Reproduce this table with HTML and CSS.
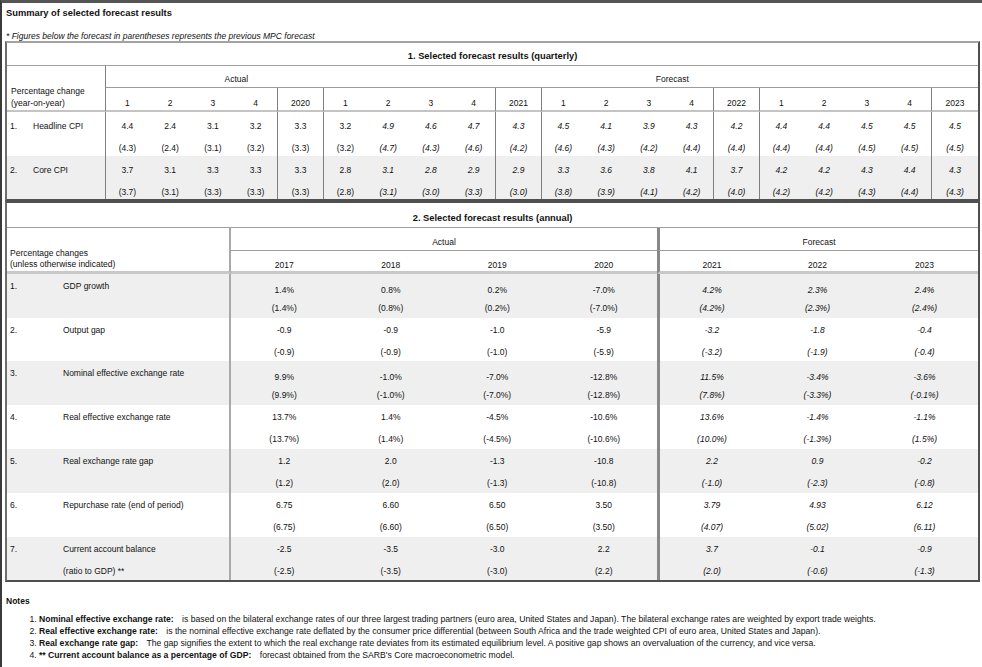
FILE: index.html
```html
<!DOCTYPE html>
<html lang="en">
<head>
<meta charset="utf-8">
<title>Summary of selected forecast results</title>
<link rel="stylesheet" href="styles.css">
</head>
<body>
<div class="page">
  <div class="title">Summary of selected forecast results</div>
  <div class="note">* Figures below the forecast in parentheses represents the previous MPC forecast</div>

  <table class="tbl quarterly">
    <colgroup>
      <col class="q-num"><col class="q-name">
      <col class="q-q" span="4"><col class="q-y">
      <col class="q-q" span="4"><col class="q-y">
      <col class="q-q" span="4"><col class="q-y">
      <col class="q-q" span="4"><col class="q-y">
    </colgroup>
    <tr class="q-title"><th colspan="22">1. Selected forecast results (quarterly)</th></tr>
    <tr class="q-h1">
      <td class="lbl-head" colspan="2" rowspan="2">Percentage change<br>(year-on-year)</td>
      <td class="grp" colspan="6">Actual</td>
      <td class="grp" colspan="14">Forecast</td>
    </tr>
    <tr class="q-h2">
      <td>1</td><td>2</td><td>3</td><td>4</td><td class="yr">2020</td>
      <td>1</td><td>2</td><td>3</td><td>4</td><td class="yr">2021</td>
      <td>1</td><td>2</td><td>3</td><td>4</td><td class="yr">2022</td>
      <td>1</td><td>2</td><td>3</td><td>4</td><td class="yr last">2023</td>
    </tr>
    <tr class="q-row">
      <td class="num">1.</td><td class="name">Headline CPI</td>
      <td>4.4<span class="p">(4.3)</span></td><td>2.4<span class="p">(2.4)</span></td><td>3.1<span class="p">(3.1)</span></td><td>3.2<span class="p">(3.2)</span></td><td class="yr">3.3<span class="p">(3.3)</span></td>
      <td>3.2<span class="p">(3.2)</span></td><td class="f">4.9<span class="p">(4.7)</span></td><td class="f">4.6<span class="p">(4.3)</span></td><td class="f">4.7<span class="p">(4.6)</span></td><td class="yr f">4.3<span class="p">(4.2)</span></td>
      <td class="f">4.5<span class="p">(4.6)</span></td><td class="f">4.1<span class="p">(4.3)</span></td><td class="f">3.9<span class="p">(4.2)</span></td><td class="f">4.3<span class="p">(4.4)</span></td><td class="yr f">4.2<span class="p">(4.4)</span></td>
      <td class="f">4.4<span class="p">(4.4)</span></td><td class="f">4.4<span class="p">(4.4)</span></td><td class="f">4.5<span class="p">(4.5)</span></td><td class="f">4.5<span class="p">(4.5)</span></td><td class="yr last f">4.5<span class="p">(4.5)</span></td>
    </tr>
    <tr class="q-row shade">
      <td class="num">2.</td><td class="name">Core CPI</td>
      <td>3.7<span class="p">(3.7)</span></td><td>3.1<span class="p">(3.1)</span></td><td>3.3<span class="p">(3.3)</span></td><td>3.3<span class="p">(3.3)</span></td><td class="yr">3.3<span class="p">(3.3)</span></td>
      <td>2.8<span class="p">(2.8)</span></td><td class="f">3.1<span class="p">(3.1)</span></td><td class="f">2.8<span class="p">(3.0)</span></td><td class="f">2.9<span class="p">(3.3)</span></td><td class="yr f">2.9<span class="p">(3.0)</span></td>
      <td class="f">3.3<span class="p">(3.8)</span></td><td class="f">3.6<span class="p">(3.9)</span></td><td class="f">3.8<span class="p">(4.1)</span></td><td class="f">4.1<span class="p">(4.2)</span></td><td class="yr f">3.7<span class="p">(4.0)</span></td>
      <td class="f">4.2<span class="p">(4.2)</span></td><td class="f">4.2<span class="p">(4.2)</span></td><td class="f">4.3<span class="p">(4.3)</span></td><td class="f">4.4<span class="p">(4.4)</span></td><td class="yr last f">4.3<span class="p">(4.3)</span></td>
    </tr>
  </table>

  <table class="tbl annual">
    <colgroup>
      <col class="a-num"><col class="a-name">
      <col class="a-act" span="4">
      <col class="a-fc" span="3">
    </colgroup>
    <tr class="a-title"><th colspan="9">2. Selected forecast results (annual)</th></tr>
    <tr class="a-h1">
      <td class="lbl-head" colspan="2" rowspan="2">Percentage changes<br>(unless otherwise indicated)</td>
      <td class="grp" colspan="4">Actual</td>
      <td class="grp fc1" colspan="3">Forecast</td>
    </tr>
    <tr class="a-h2">
      <td>2017</td><td>2018</td><td>2019</td><td>2020</td>
      <td class="fc1">2021</td><td>2022</td><td>2023</td>
    </tr>
    <tr class="a-row shade tight">
      <td class="num">1.</td><td class="name">GDP growth</td>
      <td>1.4%<span class="p">(1.4%)</span></td><td>0.8%<span class="p">(0.8%)</span></td><td>0.2%<span class="p">(0.2%)</span></td><td>-7.0%<span class="p">(-7.0%)</span></td>
      <td class="fc1 f">4.2%<span class="p">(4.2%)</span></td><td class="f">2.3%<span class="p">(2.3%)</span></td><td class="f">2.4%<span class="p">(2.4%)</span></td>
    </tr>
    <tr class="a-row short">
      <td class="num">2.</td><td class="name">Output gap</td>
      <td>-0.9<span class="p">(-0.9)</span></td><td>-0.9<span class="p">(-0.9)</span></td><td>-1.0<span class="p">(-1.0)</span></td><td>-5.9<span class="p">(-5.9)</span></td>
      <td class="fc1 f">-3.2<span class="p">(-3.2)</span></td><td class="f">-1.8<span class="p">(-1.9)</span></td><td class="f">-0.4<span class="p">(-0.4)</span></td>
    </tr>
    <tr class="a-row shade tight">
      <td class="num">3.</td><td class="name">Nominal effective exchange rate</td>
      <td>9.9%<span class="p">(9.9%)</span></td><td>-1.0%<span class="p">(-1.0%)</span></td><td>-7.0%<span class="p">(-7.0%)</span></td><td>-12.8%<span class="p">(-12.8%)</span></td>
      <td class="fc1 f">11.5%<span class="p">(7.8%)</span></td><td class="f">-3.4%<span class="p">(-3.3%)</span></td><td class="f">-3.6%<span class="p">(-0.1%)</span></td>
    </tr>
    <tr class="a-row">
      <td class="num">4.</td><td class="name">Real effective exchange rate</td>
      <td>13.7%<span class="p">(13.7%)</span></td><td>1.4%<span class="p">(1.4%)</span></td><td>-4.5%<span class="p">(-4.5%)</span></td><td>-10.6%<span class="p">(-10.6%)</span></td>
      <td class="fc1 f">13.6%<span class="p">(10.0%)</span></td><td class="f">-1.4%<span class="p">(-1.3%)</span></td><td class="f">-1.1%<span class="p">(1.5%)</span></td>
    </tr>
    <tr class="a-row shade">
      <td class="num">5.</td><td class="name">Real exchange rate gap</td>
      <td>1.2<span class="p">(1.2)</span></td><td>2.0<span class="p">(2.0)</span></td><td>-1.3<span class="p">(-1.3)</span></td><td>-10.8<span class="p">(-10.8)</span></td>
      <td class="fc1 f">2.2<span class="p">(-1.0)</span></td><td class="f">0.9<span class="p">(-2.3)</span></td><td class="f">-0.2<span class="p">(-0.8)</span></td>
    </tr>
    <tr class="a-row">
      <td class="num">6.</td><td class="name">Repurchase rate (end of period)</td>
      <td>6.75<span class="p">(6.75)</span></td><td>6.60<span class="p">(6.60)</span></td><td>6.50<span class="p">(6.50)</span></td><td>3.50<span class="p">(3.50)</span></td>
      <td class="fc1 f">3.79<span class="p">(4.07)</span></td><td class="f">4.93<span class="p">(5.02)</span></td><td class="f">6.12<span class="p">(6.11)</span></td>
    </tr>
    <tr class="a-row shade short">
      <td class="num">7.</td><td class="name">Current account balance<span class="p">(ratio to GDP) **</span></td>
      <td>-2.5<span class="p">(-2.5)</span></td><td>-3.5<span class="p">(-3.5)</span></td><td>-3.0<span class="p">(-3.0)</span></td><td>2.2<span class="p">(2.2)</span></td>
      <td class="fc1 f">3.7<span class="p">(2.0)</span></td><td class="f">-0.1<span class="p">(-0.6)</span></td><td class="f">-0.9<span class="p">(-1.3)</span></td>
    </tr>
  </table>

  <div class="notes">
    <div class="notes-title">Notes</div>
    <ol class="notes-list">
      <li><b>Nominal effective exchange rate:</b> is based on the bilateral exchange rates of our three largest trading partners (euro area, United States and Japan). The bilateral exchange rates are weighted by export trade weights.</li>
      <li><b>Real effective exchange rate:</b> is the nominal effective exchange rate deflated by the consumer price differential (between South Africa and the trade weighted CPI of euro area, United States and Japan).</li>
      <li><b>Real exchange rate gap:</b> The gap signifies the extent to which the real exchange rate deviates from its estimated equilibrium level. A positive gap shows an overvaluation of the currency, and vice versa.</li>
      <li><b>** Current account balance as a percentage of GDP:</b> forecast obtained from the SARB's Core macroeconometric model.</li>
    </ol>
  </div>
</div>
</body>
</html>
```

FILE: styles.css
```css
* { box-sizing: border-box; }

html, body {
  margin: 0;
  padding: 0;
  background: #fff;
}

body {
  font-family: "Liberation Sans", Arial, sans-serif;
  font-size: 8.5px;
  color: #111;
}

.page {
  min-height: 667px;
  border-top: 3px solid #555;
  border-left: 2px solid #3a3a3a;
  padding: 0 0 0 3px;
}

.title {
  height: 20px;
  line-height: 20px;
  padding-left: 1px;
  font-size: 9.33px;
  font-weight: bold;
}

.note {
  height: 18px;
  padding: 7px 0 0 1px;
  line-height: 12px;
  font-style: italic;
}

/* ---------- shared table ---------- */
.tbl {
  width: 975px;
  table-layout: fixed;
  border-collapse: separate;
  border-spacing: 0;
  border-style: solid;
  border-width: 2px;
  border-color: #a3a3a3 #4f4f4f #4f4f4f #6e6e6e;
}

.tbl th,
.tbl td {
  padding: 0;
  text-align: center;
  white-space: nowrap;
  overflow: hidden;
}

.tbl th {
  font-size: 9.33px;
  font-weight: bold;
  vertical-align: top;
  line-height: 12px;
}

.tbl .lbl-head {
  text-align: left;
  vertical-align: bottom;
  padding-left: 4px;
}

.tbl .num,
.tbl .name {
  text-align: left;
}

.tbl .num { padding-left: 3px; }

.tbl .f { font-style: italic; }

.tbl .p {
  display: block;
}

.shade td { background: #efefef; }

/* ---------- quarterly table ---------- */
.q-num { width: 26px; }
.q-name { width: 73px; }
.q-q { width: 42.75px; }
.q-y { width: 47px; }

.q-title { height: 23px; }
.q-title th {
  padding-top: 7px;
  border-bottom: 1px solid #a0a0a0;
}

.q-h1 { height: 22px; }
.q-h1 .grp {
  padding-top: 7px;
  vertical-align: top;
  line-height: 12px;
  border-bottom: 1px solid #9c9c9c;
}

.quarterly .lbl-head {
  line-height: 12px;
  padding-bottom: 1px;
  border-right: 1px solid #7f7f7f;
  border-bottom: 2px solid #c4c4c4;
}

.q-h2 { height: 24px; }
.q-h2 td {
  vertical-align: bottom;
  line-height: 10px;
  padding-bottom: 2px;
  border-bottom: 2px solid #c4c4c4;
}

.quarterly .yr {
  border-left: 1px solid #7f7f7f;
  border-right: 1px solid #7f7f7f;
}

.quarterly .yr.last { border-right: 0; }

.q-row { height: 44px; }
.q-row.shade { height: 43px; }
.q-row td {
  vertical-align: top;
  padding-top: 8px;
  line-height: 12px;
}
.q-row .p { margin-top: 10px; }
.q-row .name { border-right: 1px solid #7f7f7f; }

/* ---------- annual table ---------- */
.annual { border-top-color: #505050; }

.a-num { width: 51px; }
.a-name { width: 173px; }
.a-act { width: 106.5px; }
.a-fc { width: 107px; }

.a-title { height: 25px; }
.a-title th {
  padding-top: 9px;
  border-bottom: 1px solid #a0a0a0;
}

.a-h1 { height: 23px; }
.a-h1 .grp {
  padding-top: 8px;
  vertical-align: top;
  line-height: 12px;
  border-bottom: 1px solid #a0a0a0;
}

.annual .lbl-head {
  line-height: 11px;
  padding-bottom: 1px;
  padding-left: 3px;
  border-right: 2px solid #a9a9a9;
  border-bottom: 3px solid #c8c8c8;
}

.a-h2 { height: 23px; }
.a-h2 td {
  vertical-align: bottom;
  line-height: 10px;
  padding-bottom: 1px;
  border-bottom: 3px solid #c8c8c8;
}

.annual .fc1 { border-left: 3px solid #888; }

.a-row { height: 44px; }
.a-row.short { height: 43px; }
.a-row td {
  vertical-align: top;
  padding-top: 6px;
  line-height: 12px;
}
.a-row .p { margin-top: 10px; }
.a-row .name {
  padding-left: 5px;
  border-right: 2px solid #a9a9a9;
}
.a-row.tight td:not(.num):not(.name) {
  padding-top: 10px;
}
.a-row.tight td:not(.num):not(.name) .p {
  margin-top: 6px;
}

/* ---------- notes ---------- */
.notes {
  padding-top: 13px;
}

.notes-title {
  font-weight: bold;
  line-height: 12px;
  padding-left: 1px;
}

.notes-list {
  margin: 6px 0 0;
  padding-left: 34px;
  font-size: 8.65px;
  line-height: 12px;
}

.notes-list b {
  margin-right: 6px;
}
```
